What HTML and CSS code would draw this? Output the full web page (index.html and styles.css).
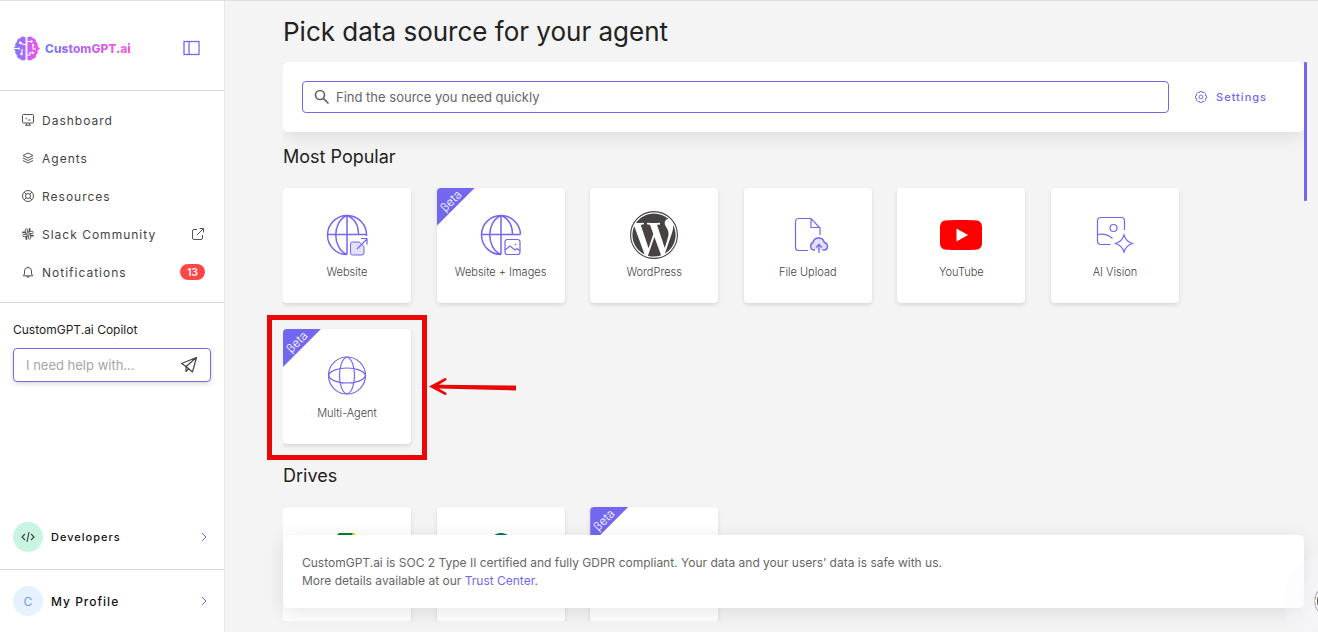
FILE: index.html
```html
<!DOCTYPE html>
<html lang="en">
<head>
  <meta charset="UTF-8" />
  <meta name="viewport" content="width=device-width, initial-scale=1.0"/>
  <title>CustomGPT.ai - Pick data source</title>
  <link rel="stylesheet" href="styles.css">
</head>
<body>
  <aside class="sidebar">
    <div class="sidebar-header">
      <a class="logo" href="#">
        <svg width="27" height="25" viewBox="0 0 27 25">
          <defs>
            <linearGradient id="brain" x1="0" x2="27" y1="0" y2="0" gradientUnits="userSpaceOnUse">
              <stop offset="0" stop-color="#7080ff"/>
              <stop offset="0.5" stop-color="#b866ff"/>
              <stop offset="1" stop-color="#ff4fe0"/>
            </linearGradient>
          </defs>
          <path fill="url(#brain)" d="M12.600 1.500C11 -.2 8 .3 7 2.200 5 2.200 3.600 4 4 6 2.400 6.800 1.800 8.700 2.500 10.300L0 12.500l2.500 2.200C1.800 16.300 2.400 18.200 4 19c-.4 2 1 3.800 3 3.800 1 1.900 4 2.400 5.600.7zM14.400 1.500C16-.2 19 .3 20 2.200c2 0 3.400 1.800 3 3.800 1.600.8 2.200 2.700 1.500 4.300l2.500 2.200-2.500 2.200c.7 1.600.1 3.500-1.500 4.300.4 2-1 3.800-3 3.800-1 1.900-4 2.400-5.600.7z"/>
          <path fill="none" stroke="#fff" stroke-width="1.100" d="M13 8.500H10L7.500 6.500M0 12.500h6M9 13v3l-1 2M14 5.500h4M14 19h3v-2.500h3M20 9v4h3"/>
          <g fill="#fff"><circle cx="7.200" cy="6.800" r="1.200"/><circle cx="6" cy="12.500" r="1.100"/><circle cx="8.500" cy="18" r="1.200"/><circle cx="18.500" cy="5.500" r="1.200"/><circle cx="20" cy="9" r="1.200"/><circle cx="20" cy="16.800" r="1.200"/></g>
        </svg>
        <span class="logo-text">CustomGPT.ai</span>
      </a>
      <button class="icon-btn" aria-label="Toggle sidebar">
        <svg width="17" height="16" viewBox="0 0 17 16" fill="none" stroke="#7367f0" stroke-width="1.300"><rect x="1" y="1.500" width="15" height="13"/><path d="M6 1.500v13"/></svg>
      </button>
    </div>

    <nav class="nav">
      <a href="#">
        <svg width="14" height="14" viewBox="0 0 14 14"><rect x="1.500" y="1.500" width="11" height="8.500" rx="1"/><path d="M5.500 10v2M8.500 10v2M4 12.300h6M4.500 5l1.500 1M7 7h2.500"/></svg>
        <span>Dashboard</span>
      </a>
      <a href="#">
        <svg width="14" height="14" viewBox="0 0 14 14"><path d="M7 2l5 2.500L7 7 2 4.500zM2 7l5 2.500L12 7M2 9.500L7 12l5-2.500"/></svg>
        <span>Agents</span>
      </a>
      <a href="#">
        <svg width="14" height="14" viewBox="0 0 14 14"><circle cx="7" cy="7" r="5.500"/><circle cx="7" cy="7" r="2.500"/><path d="M3 3l2.300 2.300M11 3L8.700 5.300M3 11l2.300-2.300M11 11L8.700 8.700"/></svg>
        <span>Resources</span>
      </a>
      <a href="#">
        <svg width="14" height="14" viewBox="0 0 14 14" stroke-width=".900"><rect x="4.300" y="1.800" width="2.200" height="5" rx="1.100"/><rect x="7.500" y="7.200" width="2.200" height="5" rx="1.100"/><rect x="7.200" y="4.300" width="5" height="2.200" rx="1.100"/><rect x="1.800" y="7.500" width="5" height="2.200" rx="1.100"/><path d="M2 5.400h2.500M9.500 8.600H12M8.600 2v2.500M5.400 9.500V12" stroke-width="1.800" stroke-linecap="round"/></svg>
        <span>Slack Community</span>
        <svg class="external" width="14" height="14" viewBox="0 0 14 14"><path d="M6 2.500H3A1.500 1.500 0 0 0 1.500 4v7A1.500 1.500 0 0 0 3 12.500h7a1.500 1.500 0 0 0 1.500-1.500V8M6 8l6.300-6.300M8.500 1.500h4v4"/></svg>
      </a>
      <a href="#">
        <svg width="14" height="14" viewBox="0 0 14 14"><path d="M7 1.500v1M3.500 9V6a3.500 3.500 0 0 1 7 0v3l1.300 1.800H2.200zM5.700 11a1.300 1.300 0 0 0 2.600 0"/></svg>
        <span>Notifications</span>
        <span class="badge">13</span>
      </a>
    </nav>

    <form class="copilot">
      <label for="copilot">CustomGPT.ai Copilot</label>
      <div class="copilot-box">
        <input id="copilot" type="text" placeholder="I need help with...">
        <button class="icon-btn" type="button" aria-label="Send">
          <svg width="18" height="18" viewBox="0 0 18 18" fill="none" stroke="#444" stroke-width="1.200" stroke-linejoin="round"><path d="M16.500 1.500L1.500 7.500l4.500 3zM16.500 1.500L6 10.500v5l2.800-3.200M16.500 1.500l-4 14.500L6 10.500"/></svg>
        </button>
      </div>
    </form>

    <div class="account">
      <a class="developers" href="#">
        <span class="avatar"><svg width="14" height="12" viewBox="0 0 14 12" fill="none" stroke="#444" stroke-width="1.200"><path d="M4 3L1 6l3 3M10 3l3 3-3 3M8 1L6 11"/></svg></span>
        <span>Developers</span>
        <svg class="chevron" width="8" height="10" viewBox="0 0 8 10"><path d="M2 1l4 4-4 4"/></svg>
      </a>
      <a class="profile" href="#">
        <span class="avatar">C</span>
        <span>My Profile</span>
        <svg class="chevron" width="8" height="10" viewBox="0 0 8 10"><path d="M2 1l4 4-4 4"/></svg>
      </a>
    </div>
  </aside>

  <main class="main">
    <h1>Pick data source for your agent</h1>

    <div class="scroll-area">
      <div class="search-card">
        <label class="search">
          <svg width="16" height="16" viewBox="0 0 16 16" fill="none" stroke="#666" stroke-width="1.700"><circle cx="6" cy="6" r="4.500"/><path d="M9.300 9.300L14.500 14.500"/></svg>
          <input type="text" placeholder="Find the source you need quickly" aria-label="Find the source you need quickly">
        </label>
        <button class="settings">
          <svg width="14" height="14" viewBox="0 0 14 14" fill="none" stroke="#7367f0" stroke-width=".900"><path d="M5.800 1.500h2.400l.5 1.300 1.400-.5 1.600 1.600-.6 1.400 1.400.5v2.400l-1.400.5.6 1.400-1.600 1.600-1.400-.6-.5 1.400H5.800l-.5-1.400-1.400.6-1.600-1.600.6-1.400-1.400-.5V5.800l1.400-.5-.6-1.400 1.600-1.600 1.400.5z"/><circle cx="7" cy="7" r="1.900"/></svg>
          Settings
        </button>
      </div>

      <section>
        <h2>Most Popular</h2>
        <div class="cards">
          <button class="card">
            <svg width="48" height="48" viewBox="0 0 48 48" class="line">
              <path d="M24 43.500A19.500 19.500 0 1 1 43.500 25M4.500 23.500h39M24 4.500v39M24 4.500c-15 6-15 33 0 39M24 4.500c8 3 11.500 11 11.500 19.500"/>
              <path d="M36 31h-6.500a2 2 0 0 0-2 2v9a2 2 0 0 0 2 2H39a2 2 0 0 0 2-2v-6.500z" fill="#e2e0fb" stroke-width="1"/>
              <path d="M34 38l10-10M38 27.500h6v6" stroke-width="1.200"/>
            </svg>
            <span>Website</span>
          </button>
          <button class="card">
            <span class="beta"><i>βeta</i></span>
            <svg width="48" height="48" viewBox="0 0 48 48" class="line">
              <path d="M24 43.500A19.500 19.500 0 1 1 43.500 23.500M4.500 23.500h39M24 4.500v39M24 4.500c-15 6-15 33 0 39M24 4.500c8 3 11.500 11 11.500 19.500"/>
              <rect x="28" y="28.500" width="15" height="15" rx="2.500" stroke-width="1.200"/>
              <path d="M28 39l5-4 5 4 2-1.500 3 2.500" stroke-width="1.200"/><circle cx="38.500" cy="33.500" r=".5" stroke-width="1"/>
            </svg>
            <span>Website + Images</span>
          </button>
          <button class="card">
            <svg width="48" height="48" viewBox="0 0 24 24" fill="#464342">
              <circle cx="12" cy="12" r="11.700" fill="none" stroke="#464342" stroke-width=".550"/>
              <path d="M21.469 6.825c.84 1.537 1.318 3.300 1.318 5.175 0 3.979-2.156 7.456-5.363 9.325l3.295-9.527c.615-1.540.82-2.771.82-3.864 0-.405-.026-.780-.070-1.110m-7.981.105c.647-.030 1.232-.105 1.232-.105.582-.075.514-.930-.067-.899 0 0-1.755.135-2.880.135-1.064 0-2.850-.150-2.850-.150-.585-.030-.661.855-.075.885 0 0 .540.061 1.125.090l1.680 4.605-2.370 7.080L5.354 6.900c.649-.030 1.234-.100 1.234-.100.585-.075.516-.930-.065-.896 0 0-1.746.138-2.874.138-.200 0-.438-.008-.690-.015C4.911 3.150 8.235 1.215 12 1.215c2.809 0 5.365 1.072 7.286 2.833-.046-.003-.091-.009-.141-.009-1.060 0-1.812.923-1.812 1.914 0 .890.513 1.643 1.060 2.531.411.720.890 1.643.890 2.977 0 .915-.354 1.994-.821 3.479l-1.075 3.585-3.900-11.610zM12 22.784c-1.059 0-2.081-.153-3.048-.437l3.237-9.406 3.315 9.087c.024.053.050.101.078.149-1.120.393-2.325.609-3.582.609M1.211 12c0-1.564.336-3.050.935-4.390L7.290 21.709C3.694 19.960 1.212 16.271 1.211 12"/>
            </svg>
            <span>WordPress</span>
          </button>
          <button class="card">
            <svg width="48" height="48" viewBox="0 0 48 48" class="line">
              <path d="M24 39.500H14.500a3 3 0 0 1-3-3v-26a3 3 0 0 1 3-3H27l9 9.500v7M27 7.500v9h8.500" stroke-width="1.200"/>
              <path d="M31 39h-1.500a4 4 0 0 1-.5-7.500 5.800 5.800 0 0 1 11.300 0A3.900 3.900 0 0 1 41 39h-2.500" fill="#e2e0fb" stroke-width="1.400"/>
              <path d="M35 42v-8M32 36.500l3-3 3 3" stroke-width="1.300"/>
            </svg>
            <span>File Upload</span>
          </button>
          <button class="card">
            <svg width="48" height="48" viewBox="0 0 48 48"><path fill="#f00" d="M8 9.500c6-.8 26-.8 32 0 3.500.5 5 3 5 7v15c0 4-1.500 6.500-5 7-6 .8-26 .8-32 0-3.500-.5-5-3-5-7v-15c0-4 1.500-6.500 5-7z"/><path fill="#fff" d="M19.500 17.500v13L31 24z"/></svg>
            <span>YouTube</span>
          </button>
          <button class="card">
            <svg width="48" height="48" viewBox="0 0 48 48" class="line">
              <path d="M19.500 33.500H9.500a3 3 0 0 1-3-3V9.500a3 3 0 0 1 3-3h21a3 3 0 0 1 3 3V19M6.500 23.500c6-1 11 .5 15 4" stroke-width="1.200"/>
              <circle cx="22.500" cy="17" r="3.500" stroke-width="1.200"/>
              <path d="M33 24c1.500 5 3.500 7 8.500 8.500-5 1.500-7 3.500-8.500 8.500-1.500-5-3.500-7-8.500-8.500 5-1.500 7-3.500 8.500-8.500z" stroke-width="1.200"/>
            </svg>
            <span>AI Vision</span>
          </button>
          <button class="card">
            <span class="beta"><i>βeta</i></span>
            <svg width="48" height="48" viewBox="0 0 48 48" class="line">
              <g stroke-width="1.200"><circle cx="24" cy="23.500" r="18.500"/><path d="M24 5c-10 3-10 34 0 37M24 5c10 3 10 34 0 37M5.500 23.500c3-10 34-10 37 0M5.500 23.500c3 10 34 10 37 0"/></g>
            </svg>
            <span>Multi-Agent</span>
          </button>
        </div>
      </section>

      <section>
        <h2>Drives</h2>
        <div class="cards">
          <button class="card" aria-label="Google Drive">
            <svg width="48" height="48" viewBox="0 0 48 48"><path fill="#00832d" d="M16 3h14l-6 11h-3L14 5z"/><path fill="#ffba00" d="M30 3l2 1 13 23H32L24 14z"/><path fill="#2684fc" d="M14 5l7 9-11 29-7-14z"/></svg>
          </button>
          <button class="card" aria-label="SharePoint">
            <svg width="48" height="48" viewBox="0 0 48 48"><circle cx="24" cy="15" r="12" fill="#036c70"/><circle cx="32" cy="25" r="11" fill="#1a9ba1"/><circle cx="25" cy="36" r="8" fill="#37c6d0"/></svg>
          </button>
          <button class="card">
            <span class="beta"><i>βeta</i></span>
          </button>
        </div>
      </section>
    </div>
    <div class="scroll-thumb"></div>

    <div class="notice">
      CustomGPT.ai is SOC 2 Type II certified and fully GDPR compliant. Your data and your users’ data is safe with us.<br>
      More details available at our <a href="#">Trust Center</a>.
    </div>

    <div class="highlight"></div>
    <svg class="arrow" width="90" height="20" viewBox="0 0 90 20"><path fill="#e90707" d="M1 9.500L17 1q2 0 1.500 2L11 7.800 88 8.500v5L11 11.500l7.500 4.500q.5 2-1.500 2z"/></svg>
    <div class="chat"></div>
  </main>
</body>
</html>
```
FILE: styles.css
```css
* { box-sizing: border-box; }

body {
  margin: 0;
  height: 100vh;
  display: flex;
  overflow: hidden;
  font-family: Inter, 'Liberation Sans', sans-serif;
  background-color: #f4f4f4;
  border-top: 1px solid #e0e0e0;
  color: #222;
}

a {
  color: #7367f0;
  text-decoration: none;
}

button,
input {
  font-family: inherit;
  border: none;
  background: none;
  padding: 0;
}

button {
  cursor: pointer;
}

input {
  min-width: 0;
  outline: none;
}

svg {
  flex: none;
}

/* Sidebar */
.sidebar {
  width: 225px;
  flex: none;
  display: flex;
  flex-direction: column;
  background: #fff;
  border-right: 1px solid #e8e8e8;
}

.sidebar-header {
  height: 90px;
  padding: 5px 24px 0 13px;
  display: flex;
  align-items: center;
  justify-content: space-between;
  border-bottom: 1px solid #d8d8d8;
}

.logo {
  display: flex;
  align-items: center;
  gap: 5px;
}

.logo-text {
  font-size: 12px;
  font-weight: 800;
  background: linear-gradient(90deg, #6b7bff, #c45cff 50%, #ff4fe0);
  -webkit-background-clip: text;
  background-clip: text;
  color: transparent;
}

.icon-btn {
  display: flex;
}

.nav {
  padding: 10px 19px 11px 21px;
  border-bottom: 1px solid #d8d8d8;
}

.nav a {
  height: 38px;
  display: flex;
  align-items: center;
  gap: 7px;
  font-size: 12px;
  letter-spacing: 1px;
  color: #444;
}

.nav svg {
  fill: none;
  stroke: #555;
}

.nav .external {
  margin-left: auto;
}

.badge {
  margin-left: auto;
  width: 25px;
  line-height: 16px;
  border-radius: 8px;
  background: #ff4747;
  color: #fff;
  font-size: 10px;
  font-weight: 600;
  letter-spacing: 0;
  text-align: center;
}

.copilot {
  padding: 18px 13px;
}

.copilot label {
  display: block;
  margin-bottom: 9px;
  font-size: 12px;
  line-height: 18px;
}

.copilot-box {
  height: 34px;
  padding: 0 12px;
  display: flex;
  align-items: center;
  border: 1px solid #7367f0;
  border-radius: 4px;
  box-shadow: 0 2px 4px rgba(0, 0, 0, 0.15);
}

.copilot-box input {
  flex: 1;
  font-size: 13px;
}

.copilot-box input::placeholder {
  color: #a5a5a5;
}

.account {
  margin-top: auto;
}

.account a {
  padding: 0 16px 0 13px;
  display: flex;
  align-items: center;
  gap: 8px;
  font-weight: 500;
  letter-spacing: 1px;
  color: #111;
}

.account .developers {
  height: 65px;
  font-size: 11px;
}

.account .profile {
  height: 63px;
  font-size: 12px;
  border-top: 1px solid #d8d8d8;
}

.avatar {
  width: 30px;
  height: 30px;
  display: flex;
  align-items: center;
  justify-content: center;
  border-radius: 50%;
  background: #e6f2ff;
  color: #6a9bf5;
  font-weight: 400;
  letter-spacing: 0;
}

.developers .avatar {
  background: #c8f5e1;
}

.chevron {
  margin-left: auto;
  fill: none;
  stroke: #7367f0;
}

/* Main */
.main {
  position: relative;
  flex: 1;
  min-width: 0;
  padding: 11px 14px 11px 58px;
  display: flex;
  flex-direction: column;
  overflow: hidden;
}

h1 {
  margin: 0 0 10px;
  font-size: 26px;
  line-height: 40px;
  font-weight: 400;
}

.scroll-area {
  flex: 1;
  min-height: 0;
  overflow: hidden;
}

.search-card {
  height: 70px;
  padding: 0 37px 0 19px;
  display: flex;
  align-items: center;
  gap: 25px;
  background: #fff;
  border-radius: 5px;
  box-shadow: 0 4px 20px rgba(0, 0, 0, 0.1);
}

.search {
  flex: 1;
  height: 32px;
  padding: 0 11px;
  display: flex;
  align-items: center;
  gap: 6px;
  border: 1px solid #7367f0;
  border-radius: 4px;
}

.search input {
  flex: 1;
  font-size: 13px;
}

.search input::placeholder {
  color: #666;
}

.settings {
  display: flex;
  align-items: center;
  gap: 8px;
  font-size: 11px;
  font-weight: 500;
  letter-spacing: 1px;
  color: #7367f0;
}

h2 {
  margin: 13px 0 19px;
  font-size: 18px;
  line-height: 24px;
  font-weight: 400;
}

section + section h2 {
  margin-top: 20px;
}

.cards {
  max-width: 896px;
  display: grid;
  grid-template-columns: repeat(auto-fill, 128px);
  justify-content: space-between;
  gap: 26px 25px;
}

.card {
  position: relative;
  height: 115px;
  padding-top: 23px;
  display: flex;
  flex-direction: column;
  align-items: center;
  gap: 5px;
  background: #fff;
  border-radius: 4px;
  box-shadow: 0 2px 4px rgba(0, 0, 0, 0.12);
  font-size: 11px;
  font-weight: 300;
  line-height: 16px;
  color: #444;
}

.line {
  fill: none;
  stroke: #7367f0;
  stroke-width: 1.5;
}

.beta {
  position: absolute;
  top: 0;
  left: 0;
  width: 38px;
  height: 38px;
  border-top-left-radius: 4px;
  background: #7367f0;
  clip-path: polygon(0 0, 100% 0, 0 100%);
  color: #fff;
}

.beta i {
  position: absolute;
  top: 5px;
  left: 0;
  width: 28px;
  font-style: normal;
  font-size: 12px;
  text-align: center;
  transform: rotate(-45deg);
}

.scroll-thumb {
  position: absolute;
  top: 61px;
  right: 11px;
  width: 3px;
  height: 139px;
  border-radius: 1px;
  background: #7367f0;
}

.notice {
  position: absolute;
  left: 58px;
  right: 14px;
  bottom: 24px;
  padding: 19px 19px 18px;
  background: #fff;
  border-radius: 5px;
  box-shadow: 0 4px 20px rgba(0, 0, 0, 0.1);
  font-size: 12px;
  line-height: 18px;
  color: #666;
}

/* Red callout round the Multi-Agent card */
.highlight {
  position: absolute;
  top: 314px;
  left: 42px;
  width: 160px;
  height: 145px;
  border: 5px solid #e90707;
}

.arrow {
  position: absolute;
  top: 376px;
  left: 203px;
}

/* Chat bubble, mostly past the right edge */
.chat {
  position: absolute;
  right: -30px;
  bottom: 14px;
  width: 34px;
  height: 34px;
  border: 1px solid #c8c8d0;
  border-radius: 50%;
  background: #5c4a3c;
  box-shadow: inset 0 0 0 2px #fff, 0 0 0 14px rgba(250, 250, 255, 0.3), 0 0 0 30px rgba(250, 250, 255, 0.3);
}
```
